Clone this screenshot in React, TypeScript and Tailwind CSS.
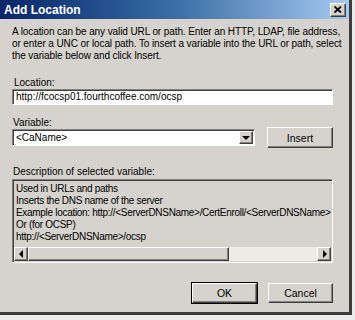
const raised =
  "border border-t-white border-l-white border-b-[#404040] border-r-[#404040] shadow-[inset_-1px_-1px_0_#808080]";
const sunken =
  "border border-t-[#808080] border-l-[#808080] border-b-white border-r-white shadow-[inset_1px_1px_0_#404040]";

function Arrow({ dir }: { dir: "left" | "right" | "down" }) {
  const pts = dir === "left" ? "5,1 5,9 1,5" : dir === "right" ? "2,1 2,9 6,5" : "1,2 9,2 5,6";
  const size = dir === "down" ? { w: 10, h: 8 } : { w: 7, h: 10 };
  return (
    <svg width={size.w} height={size.h} viewBox={`0 0 ${size.w} ${size.h}`}>
      <polygon points={pts} fill="#000" />
    </svg>
  );
}

function Button({ label, className = "" }: { label: string; className?: string }) {
  return (
    <button
      className={`flex items-center justify-center bg-[#d6d3ce] text-[10.5px] text-black ${raised} ${className}`}
    >
      {label}
    </button>
  );
}

export default function App() {
  return (
    <div className="h-[320px] w-[355px] bg-[#ececec] [font-family:'Liberation_Sans',Arial,sans-serif]">
      <div className="flex h-[315px] w-[352px] flex-col border-b-[3px] border-r-[3px] border-[#3c3c3c] bg-[#d6d3ce]">
        {/* title bar */}
        <div className="flex h-[19px] items-center justify-between bg-gradient-to-r from-[#0a246a] via-[#3a6ea5] to-[#a6caf0] pl-[4px] pr-[3px]">
          <span className="text-[12px] font-bold text-white">Add Location</span>
          <div className={`flex h-[14px] w-[16px] items-center justify-center bg-[#d6d3ce] ${raised}`}>
            <svg width="8" height="7" viewBox="0 0 8 7">
              <path d="M0.5 0.5 L7 6.5 M7 0.5 L0.5 6.5" stroke="#000" strokeWidth="1.8" />
            </svg>
          </div>
        </div>

        <div className="flex flex-col pl-[12px] pr-[16px] text-[10px] leading-[12px] text-black">
          <p className="pt-[7px] whitespace-nowrap tracking-[-0.1px]">
            A location can be any valid URL or path. Enter an HTTP, LDAP, file address,
            <br />
            or enter a UNC or local path. To insert a variable into the URL or path, select
            <br />
            the variable below and click Insert.
          </p>

          <div className="mt-[15px] pl-[2px]">Location:</div>
          <div className={`flex h-[16px] items-center bg-white pl-[3px] ${sunken}`}>
            http://fcocsp01.fourthcoffee.com/ocsp
          </div>

          <div className="mt-[12px] pl-[1px]">Variable:</div>
          <div className="flex items-start justify-between">
            <div className={`flex h-[17px] w-[243px] items-center justify-between bg-white pl-[3px] pr-[1px] ${sunken}`}>
              <span>&lt;CaName&gt;</span>
              <div className={`flex h-[13px] w-[14px] items-center justify-center bg-[#d6d3ce] ${raised}`}>
                <Arrow dir="down" />
              </div>
            </div>
            <Button label="Insert" className="-mt-[2px] h-[21px] w-[66px]" />
          </div>

          <div className="mt-[18px] pl-[1px]">Description of selected variable:</div>
          <div className={`mt-[1px] flex h-[84px] flex-col bg-[#d6d3ce] ${sunken}`}>
            <div className="flex-1 overflow-hidden whitespace-nowrap pl-[3px] pt-[3px] tracking-[-0.3px]">
              Used in URLs and paths
              <br />
              Inserts the DNS name of the server
              <br />
              Example location: http://&lt;ServerDNSName&gt;/CertEnroll/&lt;ServerDNSName&gt;
              <br />
              Or (for OCSP)
              <br />
              http://&lt;ServerDNSName&gt;/ocsp
            </div>
            <div className="mx-[1px] mb-[1px] flex h-[14px]">
              <div className={`flex w-[14px] items-center justify-center bg-[#d6d3ce] ${raised}`}>
                <Arrow dir="left" />
              </div>
              <div className={`w-[201px] bg-[#d6d3ce] ${raised}`} />
              <div className="flex-1 bg-[#ecebe8]" />
              <div className={`flex w-[14px] items-center justify-center bg-[#d6d3ce] ${raised}`}>
                <Arrow dir="right" />
              </div>
            </div>
          </div>

          <div className="mt-[20px] flex justify-end gap-[11px]">
            <Button label="OK" className="h-[20px] w-[65px] outline outline-1 outline-black" />
            <Button label="Cancel" className="h-[20px] w-[65px]" />
          </div>
        </div>
      </div>
    </div>
  );
}
